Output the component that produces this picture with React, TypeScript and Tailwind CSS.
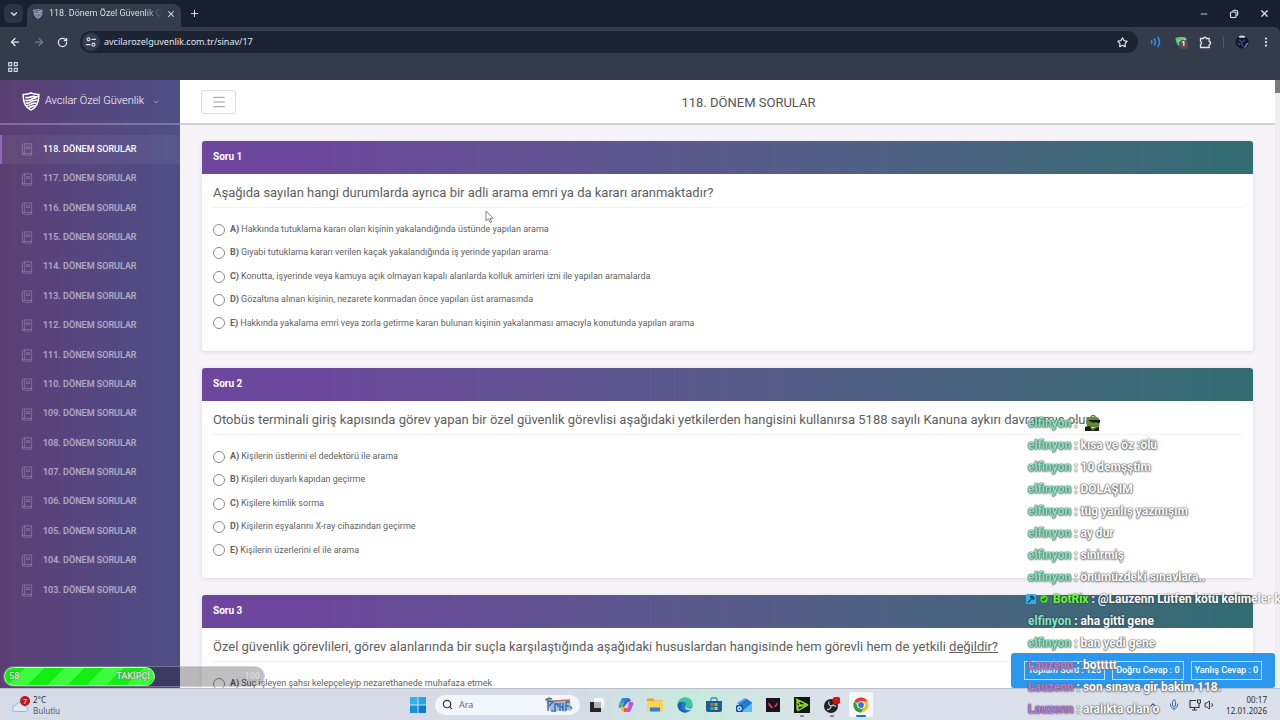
import React, { useState } from 'react';
import { ArrowLeft, ArrowRight, ChevronDown, ChevronUp, EllipsisVertical, Menu, Mic, Minus, Plus, RotateCw, Search, Star, Volume1, X } from 'lucide-react';

const PERIODS = [118, 117, 116, 115, 114, 113, 112, 111, 110, 109, 108, 107, 106, 105, 104, 103];

interface Question {
  id: number;
  text: string;
  underlined?: string;
  options: string[];
}

const QUESTIONS: Question[] = [
  {
    id: 1,
    text: 'Aşağıda sayılan hangi durumlarda ayrıca bir adli arama emri ya da kararı aranmaktadır?',
    options: [
      'Hakkında tutuklama kararı olan kişinin yakalandığında üstünde yapılan arama',
      'Gıyabi tutuklama kararı verilen kaçak yakalandığında iş yerinde yapılan arama',
      'Konutta, işyerinde veya kamuya açık olmayan kapalı alanlarda kolluk amirleri izni ile yapılan aramalarda',
      'Gözaltına alınan kişinin, nezarete konmadan önce yapılan üst aramasında',
      'Hakkında yakalama emri veya zorla getirme kararı bulunan kişinin yakalanması amacıyla konutunda yapılan arama',
    ],
  },
  {
    id: 2,
    text: 'Otobüs terminali giriş kapısında görev yapan bir özel güvenlik görevlisi aşağıdaki yetkilerden hangisini kullanırsa 5188 sayılı Kanuna aykırı davranmış olur?',
    options: [
      'Kişilerin üstlerini el dedektörü ile arama',
      'Kişileri duyarlı kapıdan geçirme',
      'Kişilere kimlik sorma',
      'Kişilerin eşyalarını X-ray cihazından geçirme',
      'Kişilerin üzerlerini el ile arama',
    ],
  },
  {
    id: 3,
    text: 'Özel güvenlik görevlileri, görev alanlarında bir suçla karşılaştığında aşağıdaki hususlardan hangisinde hem görevli hem de yetkili ',
    underlined: 'değildir?',
    options: ['Suç işleyen şahsı kelepçeleyip nezarethanede muhafaza etmek'],
  },
];

interface ChatLine {
  user: string;
  text: string;
  tone: 'mint' | 'green' | 'purple';
  solid?: boolean;
  emote?: boolean;
}

const CHAT: ChatLine[] = [
  { user: 'elfinyon', text: '', tone: 'mint', emote: true },
  { user: 'elfinyon', text: 'kısa ve öz :ölü', tone: 'mint' },
  { user: 'elfinyon', text: '10 demşştim', tone: 'mint' },
  { user: 'elfinyon', text: 'DOLAŞIM', tone: 'mint' },
  { user: 'elfinyon', text: 'tüg yanlış yazmışım', tone: 'mint' },
  { user: 'elfinyon', text: 'ay dur', tone: 'mint' },
  { user: 'elfinyon', text: 'sinirmiş', tone: 'mint' },
  { user: 'elfinyon', text: 'önümüzdeki sınavlara..', tone: 'mint' },
  { user: 'BotRix', text: '@Lauzenn Lütfen kötü kelimeler kullanma', tone: 'green', solid: true },
  { user: 'elfinyon', text: 'aha gitti gene', tone: 'mint', solid: true },
  { user: 'elfinyon', text: 'ban yedi gene', tone: 'mint' },
  { user: 'Lauzenn', text: 'bottttt', tone: 'purple' },
  { user: 'Lauzenn', text: 'son sınava gir bakim 118.', tone: 'purple' },
  { user: 'Lauzenn', text: 'aralıkta olan o', tone: 'purple' },
];

const TONES = {
  mint: 'text-[#7fe9c6]',
  green: 'text-[#6dfa3c]',
  purple: 'text-[#b57be0]',
};

function ShieldLogo({ className, color = '#ffffff' }: { className: string; color?: string }) {
  return (
    <svg viewBox="0 0 18 19" className={className} fill="none" stroke={color} strokeLinecap="round">
      <path d="M1.200 2.400C4 2.500 6.500 2 9 1c2.500 1 5 1.500 7.800 1.400.3 7.200-1.800 12.800-7.800 15.600C3 15.200.9 9.600 1.200 2.400Z" strokeWidth="1.500" />
      <path d="M4 5.500c2.500 1 5-1.500 8-1 1 .2 2 .6 2.800.3-.8 1.500-2.800 1-4.300 2C8.500 8 7 9.500 3.500 8.300" strokeWidth="1.700" />
      <path d="M4.300 11c3 1 4-1.500 6.500-2.200 1.500-.4 2.800-.3 4-.8M5.500 13.400c2.500.3 3.500-1.600 5.500-2 1.200-.2 2.200 0 3-.4M7.500 15.300c1.500-.2 2.500-1.400 5-1.500" strokeWidth="1.500" />
    </svg>
  );
}

function TuneIcon() {
  return (
    <svg viewBox="0 0 12 12" className="size-3" fill="none" stroke="#d5dae3" strokeWidth="1.200">
      <circle cx="3.500" cy="3.300" r="1.500" />
      <path d="M6.500 3.300H11M1 8.700h4.500" />
      <circle cx="8.500" cy="8.700" r="1.500" />
    </svg>
  );
}

function BrowserChrome() {
  return (
    <div className="shrink-0 bg-[#181f2e] text-[#e2e6ee]">
      <div className="flex h-[27px] items-end pl-1">
        <button aria-label="Sekmelerde ara" className="mb-1 flex size-[19px] items-center justify-center rounded-md bg-[#2c3443]">
          <ChevronDown className="size-2.5" strokeWidth={3} />
        </button>
        <div className="ml-1 flex h-[23px] w-[154px] items-center rounded-t-lg bg-[#343c4b] pb-1 pl-1.5">
          <ShieldLogo className="h-2.5 w-2.5 shrink-0" color="#bcc5fa" />
          <span className="ml-1.5 w-[113px] overflow-hidden bg-linear-to-r from-[#e9ecf2] from-85% to-transparent bg-clip-text text-[9px] whitespace-nowrap text-transparent">118. Dönem Özel Güvenlik Çıkmış</span>
          <button aria-label="Sekmeyi kapat" className="ml-1">
            <X className="size-2.5" strokeWidth={2.500} />
          </button>
        </div>
        <button aria-label="Yeni sekme" className="mb-2 ml-2">
          <Plus className="size-[11px]" />
        </button>
        <div className="mb-2 ml-auto flex items-center gap-5 pr-[10px]">
          <button aria-label="Simge durumuna küçült"><Minus className="size-[10px]" /></button>
          <button aria-label="Geri yükle">
            <svg viewBox="0 0 10 10" className="size-[10px]" fill="none" stroke="currentColor" strokeWidth="1.100">
              <rect x="1.500" y="3" width="5.500" height="5.500" rx="1" />
              <path d="M3.500 2.500Q3.700 1.300 5 1.300h1.700q2 0 2 2v2q0 1.200-1.200 1.400" />
            </svg>
          </button>
          <button aria-label="Kapat"><X className="size-[11px]" strokeWidth={2.500} /></button>
        </div>
      </div>
      <div className="rounded-tr-md bg-[#343c4b]">
        <div className="flex h-[30px] items-center pr-2 pl-[9px]">
          <button aria-label="Geri" className="mr-3"><ArrowLeft className="size-3" strokeWidth={2.500} /></button>
          <button aria-label="İleri" className="mr-3 text-[#727a88]"><ArrowRight className="size-3" strokeWidth={2.500} /></button>
          <button aria-label="Yenile"><RotateCw className="size-[11px]" strokeWidth={2.800} /></button>
          <div className="ml-3 flex h-[22px] flex-1 items-center rounded-full bg-[#1c2433] pr-2.5 pl-0.5">
            <span className="flex size-[18px] items-center justify-center rounded-full bg-[#343c4b]"><TuneIcon /></span>
            <input aria-label="Adres" defaultValue="avcilarozelguvenlik.com.tr/sinav/17" className="ml-1 min-w-0 flex-1 bg-transparent font-['Noto_Sans',sans-serif] text-[9px] leading-4 outline-none" />
            <button aria-label="Yer işareti"><Star className="size-[11px]" strokeWidth={2.500} /></button>
          </div>
          <svg viewBox="0 0 12 12" className="ml-3 size-3" fill="none" stroke="#2b8fe8" strokeWidth="1.600" strokeLinecap="round">
            <path d="M1.500 4.500q1 1.500 0 3M4.500 3q2 3 0 6M8 1.500q3 4.500 0 9" />
          </svg>
          <span className="relative ml-[13px] size-3">
            <svg viewBox="0 0 12 12" className="size-3">
              <path d="M.5 2Q3.500.5 6 1q3-.5 5.500 1-.2 6.500-5.500 9.500Q.7 8.500.5 2Z" fill="#5fc878" />
              <path d="M3 5q4 1 8-2" stroke="#a7e8b3" strokeWidth="1" fill="none" />
            </svg>
            <span className="absolute top-1 left-1 flex size-[9px] items-center justify-center rounded-sm bg-[#5d4f4e] text-[7px] font-bold text-white">1</span>
          </span>
          <button aria-label="Uzantılar" className="ml-3">
            <svg viewBox="0 0 13 13" className="size-[13px]" fill="none" stroke="currentColor" strokeWidth="1.300" strokeLinejoin="round">
              <path d="M1.500 2.500H4.500a1.400 1.400 0 0 1 2.800 0H10.200V5.500a1.400 1.400 0 0 1 0 2.800V11.500H1.500V8.500a1.600 1.600 0 0 0 0-3Z" />
            </svg>
          </button>
          <span className="mx-[11px] h-[11px] w-px bg-[#4e586a]" />
          <svg viewBox="0 0 14 14" className="size-[14px]">
            <circle cx="7" cy="7" r="6.500" fill="#111a2b" />
            <path d="M3.500 1.500q3.500-2 7 0l-1 1.300H4.500Z" fill="#cfd8e6" />
            <path d="M4 5l3 2 3-2M6 8l2 3M3 8l2 2" stroke="#3c4f92" strokeWidth="1.400" fill="none" />
            <path d="M12.500 8q-1 3-3.500 4.500" stroke="#b9c0c8" fill="none" />
          </svg>
          <button aria-label="Menü" className="ml-[11px]"><EllipsisVertical className="size-3" strokeWidth={2.500} /></button>
        </div>
        <div className="flex h-[23px] items-center px-2 pb-1">
          <button aria-label="Uygulamalar">
            <svg viewBox="0 0 10 10" className="size-[10px]" fill="none" stroke="#cfd5df" strokeWidth="1.200">
              <path d="M.7.7h3v3h-3zM6.300.7h3v3h-3zM.7 6.300h3v3h-3zM6.300 6.300h3v3h-3z" />
            </svg>
          </button>
        </div>
      </div>
    </div>
  );
}

function BookIcon() {
  return (
    <svg viewBox="0 0 12 14" className="h-[13px] w-3 shrink-0" fill="none" stroke="currentColor" strokeWidth="1">
      <path d="M2.500 1H11v12H2.500A1.500 1.500 0 0 1 1 11.500v-9A1.500 1.500 0 0 1 2.500 1ZM3.500 1v10M1 11.200h10M5.500 4h3.500v2H5.500z" />
    </svg>
  );
}

function Sidebar({ active, onSelect }: { active: number; onSelect: (n: number) => void }) {
  return (
    <aside className="w-[180px] shrink-0 bg-linear-to-r from-[#5c3f72] from-0% via-[#55467f] via-45% to-[#4f4e86]">
      <div className="flex h-[45px] items-center border-b-2 border-white/25 pl-[22px]">
        <ShieldLogo className="h-[19px] w-[18px]" />
        <button className="ml-[5px] flex items-center text-[11px] font-light text-white">
          Avcılar Özel Güvenlik
          <ChevronDown className="ml-2 size-2 text-white/50" strokeWidth={2.500} />
        </button>
      </div>
      <nav className="mt-[10px] flex h-[470px] flex-col">
        {PERIODS.map((n) => (
          <a
            key={n}
            href={`#${n}`}
            onClick={() => onSelect(n)}
            className={`flex flex-1 items-center border-l-2 pl-[19px] text-[9px] font-medium ${
              n === active ? 'border-[#8f68b8] bg-white/5 text-white' : 'border-transparent text-white/55'
            }`}
          >
            <span className="text-white/25"><BookIcon /></span>
            <span className="ml-[10px]">{n}. DÖNEM SORULAR</span>
          </a>
        ))}
      </nav>
    </aside>
  );
}

function QuestionCard({ question }: { question: Question }) {
  return (
    <section className="shrink-0 rounded-[3px] bg-white pb-4 shadow-[0_1px_4px_rgba(60,50,90,0.14)]">
      <h2 className="flex h-[33px] items-center rounded-t-[3px] bg-linear-to-r from-[#6c479d] from-10% to-[#316d72] px-[11px] pb-0.5 text-[10px] font-bold text-white">Soru {question.id}</h2>
      <div className="px-[11px]">
        <p className="flex h-[34px] items-center border-b border-[#f3f3f3] pt-1 text-[13px] whitespace-pre text-[#5e5e5e]">
          {question.text}
          {question.underlined && <u>{question.underlined}</u>}
        </p>
        <div className={`mt-[10px] flex flex-col ${question.options.length > 1 ? 'h-[117px]' : 'h-6'}`}>
          {question.options.map((option, i) => (
            <label key={option} className="flex flex-1 items-center text-[9px] text-[#626262]">
              <input type="radio" name={`soru-${question.id}`} className="mr-[5px] size-3 appearance-none rounded-full border border-[#8b8b8b] bg-white checked:border-4 checked:border-[#6c479d]" />
              <b className="mr-0.5 font-bold">{'ABCDE'[i]})</b>
              {option}
            </label>
          ))}
        </div>
      </div>
    </section>
  );
}

function Page() {
  const [active, setActive] = useState(118);
  return (
    <div className="relative flex min-h-0 flex-1 overflow-hidden bg-[#f6f4f8]">
      <Sidebar active={active} onSelect={setActive} />
      <main className="flex min-w-0 flex-1 flex-col">
        <header className="relative flex h-[45px] shrink-0 items-center border-b-2 border-[#d3d1d6] bg-white pl-[21px]">
          <button aria-label="Menüyü aç" className="flex h-6 w-[35px] items-center justify-center rounded-[3px] border border-[#dcdcdc]">
            <Menu className="size-4 text-[#9a9a9a]" strokeWidth={1.500} />
          </button>
          <h1 className="flex-1 pt-0.5 pr-[14px] text-center text-[13px] text-[#555]">{active}. DÖNEM SORULAR</h1>
        </header>
        <div className="flex min-h-0 flex-1 flex-col gap-[17px] overflow-hidden pt-4 pr-[22px] pl-[22px]">
          {QUESTIONS.map((q) => (
            <QuestionCard key={q.id} question={q} />
          ))}
        </div>
      </main>
      <div className="w-[5px] shrink-0 bg-[#efeff0]">
        <div className="h-[13px] bg-[#7c7c7c]" />
      </div>

      <div className="absolute right-[5px] bottom-0 flex h-[35px] w-[264px] items-center justify-center gap-[7px] rounded-[3px] bg-[#2b98ef] text-[9px] font-medium whitespace-nowrap text-white">
        <span className="border border-white/70 px-[3px] py-0.5">Toplam Soru : 125</span>
        <span className="border border-white/70 px-[3px] py-0.5">Doğru Cevap : 0</span>
        <span className="border border-white/70 px-[3px] py-0.5">Yanlış Cevap : 0</span>
      </div>

      {/* follower goal */}
      <div className="absolute bottom-[1px] left-[3px] flex h-[21px] w-[262px] items-center rounded-full border border-white/30 bg-black/25 text-[9px] font-bold text-[#d6dbd6]">
        <div className="flex h-full w-[151px] items-center justify-between rounded-full border border-[#c3f5c3] bg-[repeating-linear-gradient(135deg,#12ee12_0_14px,#3dfb3d_14px_28px)] px-1 [text-shadow:0_0_2px_#3b7a3b]">
          <span>58</span>
          <span>TAKİPÇİ</span>
        </div>
        <span className="ml-auto pr-1 text-white/40">100</span>
      </div>

      <svg viewBox="0 0 9 14" className="absolute top-[130px] left-[485px] h-[14px] w-[9px]" fill="#fff" stroke="#777" strokeWidth=".9">
        <path d="M1 1v10l2.400-2.200L5 12.500l1.600-.7L5 8.300h3.200Z" />
      </svg>
    </div>
  );
}

function Emote() {
  return (
    <svg viewBox="0 0 16 15" className="ml-1 h-[15px] w-4">
      <path d="M1 5Q3 0 8 1q6-1 7 4l-1 6H2Z" fill="#5d8f3d" />
      <path d="M3 4h12v2q-2 2-4 0Q8 8 5 5Z" fill="#15191a" />
      <path d="M5 9q5 2 9 0" stroke="#a0643d" strokeWidth="1.400" fill="none" />
      <path d="M0 15v-4l4-1 3 2 7-1v4Z" fill="#171b1a" />
      <path d="M5 12l3 3 3-3Z" fill="#4f8537" />
    </svg>
  );
}

function ChatOverlay() {
  return (
    <div className="pointer-events-none absolute right-0 bottom-0 w-[252px] text-[12px] leading-[22px] font-bold whitespace-nowrap">
      {CHAT.map((line, i) => (
        <div
          key={i}
          className={`flex h-[22px] items-center ${
            line.solid ? '[text-shadow:0_0_2px_#222]' : '[text-shadow:0_0_1px_#555,0_0_1px_#666,0_0_2px_#777,0_1px_2px_#888]'
          }`}
        >
          {line.tone === 'green' && (
            <span className="-ml-0.5 mr-[5px] flex items-center gap-1">
              <svg viewBox="0 0 10 10" className="size-[10px]">
                <rect width="10" height="10" rx="1" fill="#28b3ee" />
                <path d="M2 8.500l4.500-4.500M4 2l4 4M5.500 1.500l3 3" stroke="#12455f" strokeWidth="1.500" />
              </svg>
              <svg viewBox="0 0 10 10" className="size-2">
                <circle cx="5" cy="5" r="4.700" fill="#4bd92a" />
                <path d="M2.700 5.200l1.600 1.600 3-3.300" stroke="#0d3b0a" strokeWidth="1.400" fill="none" />
              </svg>
            </span>
          )}
          <span className={TONES[line.tone]}>{line.user}</span>
          <span className="whitespace-pre text-white"> : {line.text}</span>
          {line.emote && <Emote />}
        </div>
      ))}
    </div>
  );
}

const APPS = [
  {
    name: 'Görev görünümü',
    art: (
      <>
        <path d="M5 1h10v10H5z" fill="#f4f4f4" />
        <path d="M1 5h11v10H1z" fill="#262626" />
        <path d="M5 5h7v6H5z" fill="#b4b4b4" />
      </>
    ),
  },
  {
    name: 'Copilot',
    art: (
      <>
        <path d="M5 1h5l1 4H7L5 11H2Q0 11 1 8l2-5q.5-2 2-2Z" fill="#2a8ee0" />
        <path d="M2 9h4l1 4 3 2H6q-2 0-3-3Z" fill="#f5b33a" />
        <path d="M10 1q2 0 3 3l-3 1-4 5H4L8 2Z" fill="#3f5fd0" />
        <path d="M3 6l3-1-1 5H2Z" fill="#51c56e" />
        <path d="M11 5h3q2 0 1 3l-2 5q-.5 2-2 2H8l2-5Z" fill="#c155d8" />
        <path d="M6 11h4l-1 3q-1 1-3 1Z" fill="#ef5a4b" />
      </>
    ),
  },
  {
    name: 'Dosya Gezgini',
    art: (
      <>
        <path d="M0 1.500h6l2 2h8v3H0z" fill="#e0a325" />
        <path d="M0 4h16v9.500q0 1-1 1H1q-1 0-1-1Z" fill="#fbd35c" />
        <path d="M3 10.500h10V14.500H3z" fill="#2e83cf" />
      </>
    ),
  },
  {
    name: 'Edge',
    art: (
      <>
        <circle cx="8" cy="8" r="7.500" fill="#1a80cc" />
        <path d="M.6 7Q2 .5 8.500.5q6.500.5 7 6 0 4-4 4.500-3 0-3-2 1-1 .5-2.500Q7.500 4 5 4.500 2 5 .6 7Z" fill="#3fc8a0" />
        <path d="M.5 8Q2 4.500 5.500 5 3 8 5 11.500q2.500 4 7 2.500-2.500 2-5.500 1.500Q1 14 .5 8Z" fill="#1d5fae" />
        <path d="M8.300 8q-.3 3.500 3.700 3.500 2 0 3.500-1-1 2-3.500 2.500Q7 13 8.300 8Z" fill="#dbe8ee" />
      </>
    ),
  },
  {
    name: 'Microsoft Store',
    art: (
      <>
        <path d="M5 4V2q0-1 1-1h4q1 0 1 1v2" stroke="#2a93cf" strokeWidth="1.300" fill="none" />
        <path d="M0 4h16v9q0 2-2 2H2q-2 0-2-2Z" fill="#1d5e91" />
        <path d="M4.500 6H7.500V9H4.500z" fill="#f0583a" />
        <path d="M8.500 6h3v3h-3z" fill="#88c540" />
        <path d="M4.500 10h3v3h-3z" fill="#33a8e8" />
        <path d="M8.500 10h3v3h-3z" fill="#f9c43a" />
      </>
    ),
  },
  {
    name: 'Outlook',
    art: (
      <>
        <path d="M1 6l8-5 3 2-8 6Z" fill="#4f9fe8" />
        <path d="M3 7l8-5 5 3.500V14q0 1-1 1H4Z" fill="#2079d4" />
        <path d="M16 6v8q0 1-1 1H5Z" fill="#55c3f2" />
        <rect y="8" width="7" height="7" rx="1.500" fill="#124f9e" />
        <circle cx="3.500" cy="11.500" r="1.700" stroke="#fff" strokeWidth="1.200" fill="none" />
      </>
    ),
  },
  {
    name: 'Valorant',
    art: (
      <>
        <path d="M1 1h14v14H1z" fill="#1b1220" />
        <path d="M3.500 5l5 6H6L3.500 8ZM12.500 5v3l-1.500 1.800H9Z" fill="#dc4257" />
      </>
    ),
  },
  {
    name: 'Razer',
    running: true,
    art: (
      <>
        <path d="M0 0h16v16H0z" fill="#11170f" />
        <path d="M3 2.500l11 5.500H6ZM4 9h8l-8 4.500ZM3 3v10" fill="none" stroke="#86d52d" strokeWidth="1.400" />
      </>
    ),
  },
  {
    name: 'OBS',
    running: true,
    art: (
      <>
        <circle cx="7" cy="9" r="7" fill="#1f1f22" />
        <path d="M7 9Q4 8 5 4.500M7 9q3-2 5 1M7 9q0 3.500-4 3.500" stroke="#c9c9c9" strokeWidth="1.300" fill="none" />
        <circle cx="12.500" cy="3.500" r="4" fill="#dd1010" />
      </>
    ),
  },
  {
    name: 'Chrome',
    running: true,
    active: true,
    art: (
      <>
        <circle cx="8" cy="8" r="7.500" fill="#f8c51c" />
        <path d="M8 8L1.500 4.200A7.500 7.500 0 0 1 14.500 4.300H8Z" fill="#e33b2e" />
        <path d="M1.500 4.200A7.500 7.500 0 0 0 8 15.500L11.200 9.800 4.700 9.800Z" fill="#2a9c4c" />
        <circle cx="8" cy="8" r="3.800" fill="#fff" />
        <circle cx="8" cy="8" r="2.900" fill="#3076e0" />
      </>
    ),
  },
];

function Taskbar() {
  return (
    <footer className="flex h-8 shrink-0 items-center border-t border-[#b9bfc9] bg-linear-to-r from-[#d5dce8] from-45% via-[#c9e9dd] via-54% to-[#dbe1ea] to-65% font-['Noto_Sans',sans-serif] text-[#2c3038]">
      <button className="flex flex-1 items-center gap-[3px] pl-3 text-left text-[8px] leading-[11px]">
        <svg viewBox="0 0 18 18" className="size-[18px]">
          <path d="M3 15.500a3 3 0 0 1 .5-6Q5 5.500 9 7q3 .5 3 3.500a2.500 2.500 0 0 1 2 5Z" fill="#dcebfb" stroke="#8cb9ee" />
          <circle cx="13" cy="5" r="5" fill="#ba1c21" />
          <text x="13" y="7.700" textAnchor="middle" fontSize="7" fill="#fff">7</text>
        </svg>
        <span>
          2°C<br />
          <span className="text-[#555a63]">Bulutlu</span>
        </span>
      </button>
      <button aria-label="Başlat" className="ml-[3px] flex w-6 justify-center">
        <svg viewBox="0 0 16 16" className="size-4">
          <path d="M0 0h7.500v7.500H0z" fill="#35b1e9" />
          <path d="M8.500 0H16v7.500H8.500z" fill="#2aa2e4" />
          <path d="M0 8.500h7.500V16H0z" fill="#178fdb" />
          <path d="M8.500 8.500H16V16H8.500z" fill="#0b7ccd" />
        </svg>
      </button>
      <label className="ml-[5px] flex h-5 w-[145px] items-center rounded-full bg-[#f3f6fa] px-[7px]">
        <Search className="size-[11px] shrink-0" strokeWidth={2.500} />
        <input placeholder="Ara" className="ml-1.5 w-0 flex-1 bg-transparent text-[9px] outline-none placeholder:text-[#666b74]" />
        <svg viewBox="0 0 28 16" className="h-4 w-7 shrink-0" fill="none">
          <path d="M1 3l4-2 3 2 17 0 1 11-4-1-2 2-5-2-5 2-5-2Z" fill="#9bbce2" />
          <path d="M3 2v12M3 4l5 1-4 4M10 6v9M10 7h3v3M15 6v8M18 6v8M16 10h3M21 5v9M21 5h4M21 9h3" stroke="#3e65a9" strokeWidth="1.400" />
          <path d="M8 4l17-1" stroke="#bb6f64" strokeWidth="1.500" />
          <path d="M0 3l4-2 3 1M6 14h3M25 9l2 3" stroke="#5a8250" strokeWidth="1.500" />
        </svg>
      </label>
      <div className="ml-0.5 grid w-[294px] grid-cols-10 justify-items-center">
        {APPS.map((app) => (
          <button
            key={app.name}
            aria-label={app.name}
            className={`relative flex h-[25px] w-6 items-center justify-center rounded-xs ${app.active ? 'bg-white/70' : ''}`}
          >
            <svg viewBox="0 0 16 16" className="size-4">{app.art}</svg>
            {app.running && (
              <span className={`absolute bottom-0 h-0.5 rounded-full ${app.active ? 'w-[10px] bg-[#1475c8]' : 'w-1 bg-[#7c828b]'}`} />
            )}
          </button>
        ))}
      </div>
      <div className="flex flex-1 items-center justify-end pr-[13px]">
        <ChevronUp className="mr-[10px] size-[10px]" strokeWidth={2.500} />
        <Mic className="mr-[9px] size-3 text-[#3c6fae]" />
        <svg viewBox="0 0 12 12" className="mr-[3px] size-3" fill="none" stroke="#333" strokeWidth="1.100">
          <path d="M7 1.500H1v7h9V6M3 11h5M5.500 8.500V11M8.500 1h3v2.500q-1.500 2-3 0ZM10 4.500V8" />
        </svg>
        <Volume1 className="size-3" strokeWidth={2} />
        <div className="ml-[10px] text-right text-[8px] leading-[11px]">
          00:17<br />12.01.2026
        </div>
      </div>
    </footer>
  );
}

export default function App() {
  return (
    <div className="relative flex h-screen flex-col overflow-hidden font-['Roboto',sans-serif]">
      <BrowserChrome />
      <Page />
      <Taskbar />
      <ChatOverlay />
    </div>
  );
}
